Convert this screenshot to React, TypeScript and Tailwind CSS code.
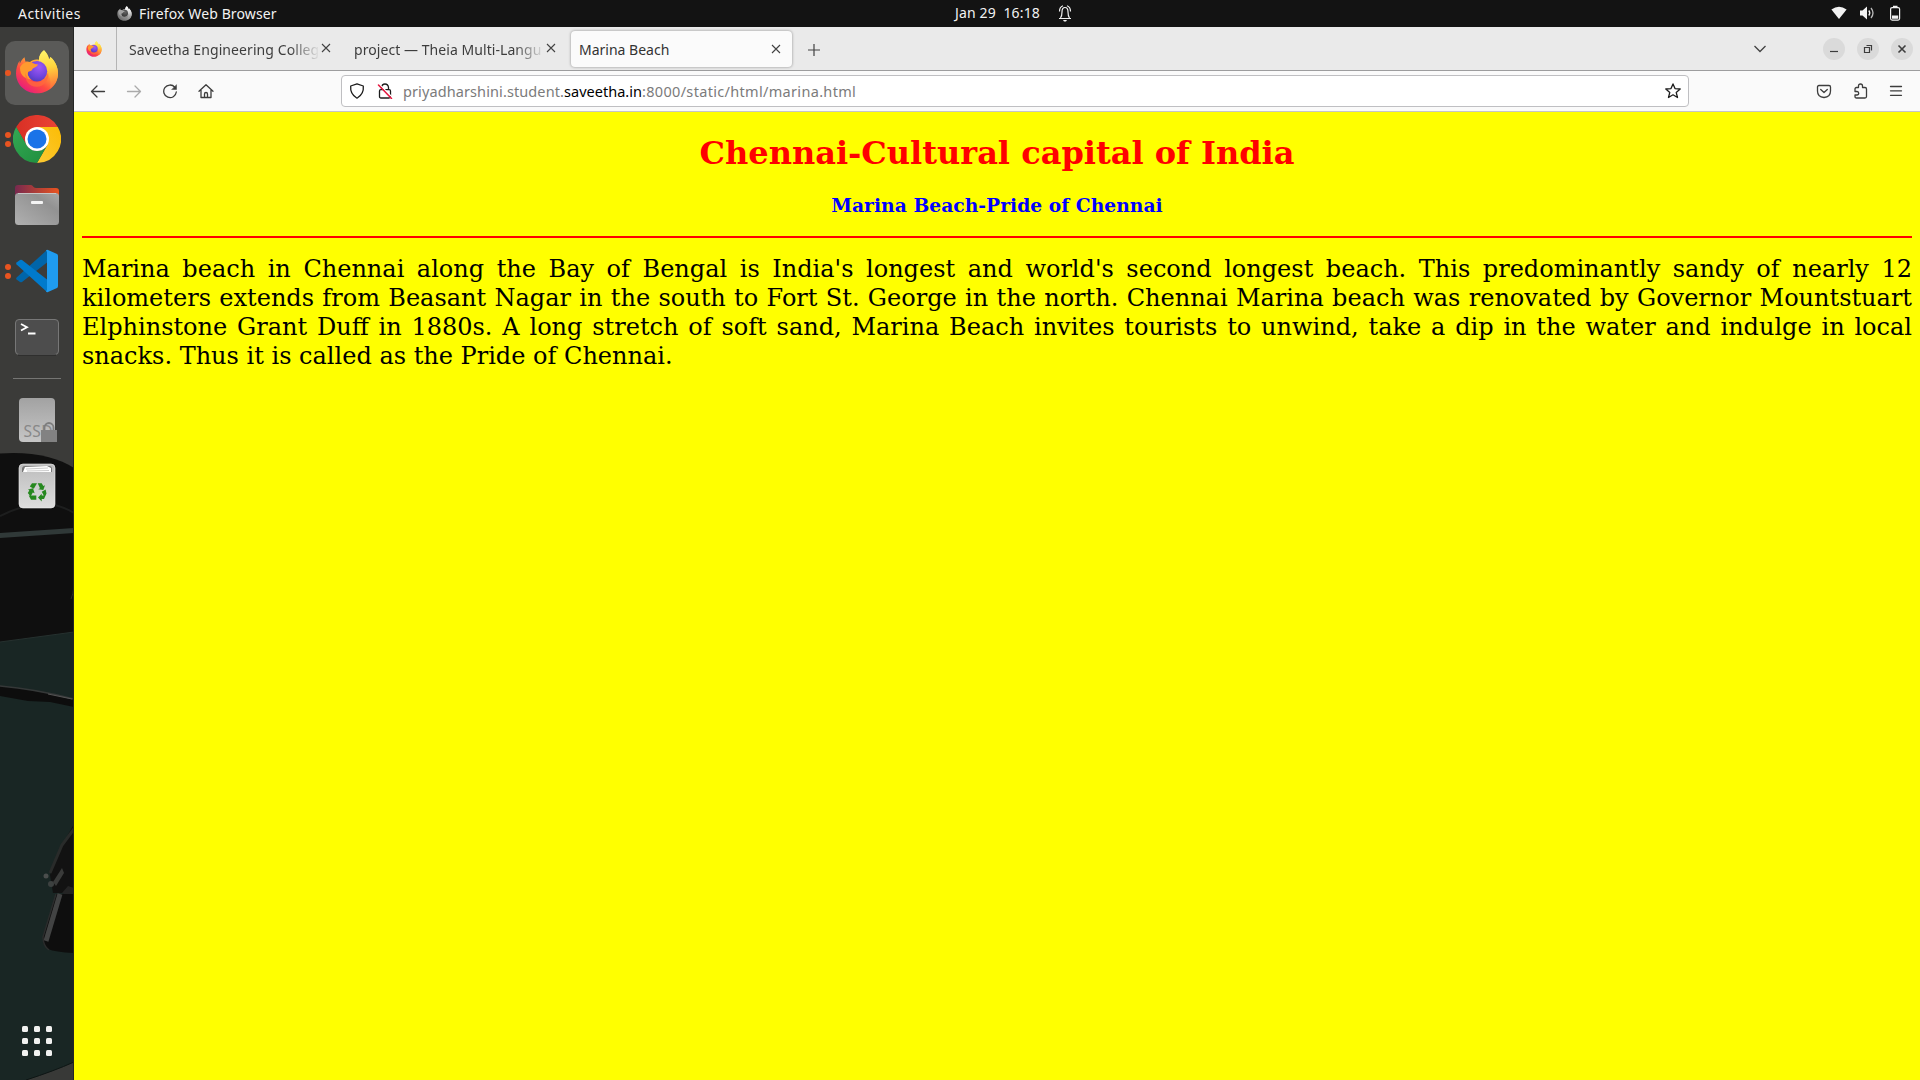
import React from "react";

const ui = "font-['Noto_Sans','Open_Sans',sans-serif]";

function FirefoxLogo({ id, className, mono = false, viewBox = "3 2 42 44" }: { id: string; className: string; mono?: boolean; viewBox?: string }) {
  return (
    <svg viewBox={viewBox} className={className}>
      <defs>
        <linearGradient id={id + "a"} x1="0.85" y1="0.1" x2="0.2" y2="1">
          <stop offset="0" stopColor={mono ? "#e8e8e8" : "#fff44f"} />
          <stop offset="0.35" stopColor={mono ? "#bdbdbd" : "#ffa436"} />
          <stop offset="0.65" stopColor={mono ? "#8a8a8a" : "#ff4a41"} />
          <stop offset="1" stopColor={mono ? "#666" : "#e31587"} />
        </linearGradient>
        <linearGradient id={id + "b"} x1="0.4" y1="0" x2="0.5" y2="1">
          <stop offset="0" stopColor={mono ? "#fff" : "#fff36a"} />
          <stop offset="0.45" stopColor={mono ? "#e0e0e0" : "#ffd53d"} />
          <stop offset="1" stopColor={mono ? "#888" : "#ff7139"} />
        </linearGradient>
        <radialGradient id={id + "c"} cx="0.6" cy="0.3" r="0.8">
          <stop offset="0" stopColor={mono ? "#666" : "#a05af5"} />
          <stop offset="0.6" stopColor={mono ? "#444" : "#6f44dc"} />
          <stop offset="1" stopColor={mono ? "#333" : "#4a3bb5"} />
        </radialGradient>
      </defs>
      <path d="M31 2.500c3 3 4.500 6 5 9 1-.8 1.200-1.500 1.400-2.300C42 13 45 19.500 45 25.500 45 37.500 35.500 45.500 24 45.500S3 37 3 25.500C3 21 4.300 16.500 6.500 13l.3 3C8 13 9.500 11 11.500 9.500L12.500 14c1.500-.4 3-.3 4.500.3C19 12 23 11 26 12c0-4 2-7.500 5-9.500z" fill={"url(#" + id + "a)"} />
      <path d="M31 2.500c3 3 4.500 6 5 9 1-.8 1.200-1.500 1.400-2.300C42 13 45 19.500 45 25.500c0 6-3 12-8 15 1-5 .5-9-1-12-2-6-11-9-10-17.500.4-3.500 2-6.500 5-8.500z" fill={"url(#" + id + "b)"} />
      <circle cx="24" cy="23.500" r="10.200" fill={"url(#" + id + "c)"} />
      <path d="M7 20c1-3.500 5-6 10-5.700 2 .2 3.500 1.700 5 1.900l3 .5c-.5 2.500-5 3-5.700 4.800 0 2-3.500 1.500-4.200 2.900-.9 2 .2 5 3.200 7.500C11 31 7 27 7 20z" fill={mono ? "#a2a2a2" : "#ff9a2e"} />
      <path d="M12.500 25c1 6 5.500 9.500 11 9.500 6 0 11-4 11.500-10.500 1.500 7-3 15-11.500 15-7 0-12-5.500-11-14z" fill={mono ? "#888" : "#ff6a3c"} opacity=".75" />
    </svg>
  );
}

function Wallpaper() {
  return (
    <svg viewBox="0 0 74 1053" className="absolute inset-0 h-full w-full" preserveAspectRatio="none">
      <rect width="74" height="1053" fill="#3b3b39" />
      <path d="M0 426.500C30 424 58 430 74 441V620H0z" fill="#0f0f0f" />
      <path d="M0 489Q18 480 36 477T74 486" fill="none" stroke="#1d1e1e" strokeWidth="2" />
      <path d="M0 506L74 501V506L0 511z" fill="#303938" />
      <path d="M74 559Q73 568 71 572" stroke="#292929" fill="none" />
      <path d="M0 615L74 605V1053H0z" fill="#192624" />
      <path d="M0 615L74 605" stroke="#26312f" />
      <path d="M0 659Q35 662 74 673V680L50 675 28 674 0 669z" fill="#0d0d0d" />
      <path d="M0 659Q35 662 74 672" stroke="#353838" strokeWidth="1.500" fill="none" />
      <path d="M48 667L72 672" stroke="#555" strokeWidth="1" />
      <path d="M74 797L62 818 53 839 50 848 53 866H74z" fill="#121212" />
      <path d="M74 802L62 818 53 839 50 846" stroke="#292b2a" strokeWidth="3" fill="none" />
      <path d="M53 855L62 841 64 846 56 859z" fill="#3a3b3a" />
      <circle cx="46" cy="849" r="2.500" fill="#4b4e4d" />
      <circle cx="51" cy="857" r="3" fill="#3d4140" />
      <path d="M62 866L68 859 74 861V871z" fill="#242424" />
      <path d="M56 867H74V926Q55 925 48 922 42 918 43 909z" fill="#0e0e0e" />
      <path d="M60 867L46 914" stroke="#424343" strokeWidth="5" fill="none" />
      <path d="M56 867L43 910Q43 919 49 923" stroke="#2b2c2c" strokeWidth="1.500" fill="none" />
      <path d="M26 1053Q54 1044 74 1035V1053z" fill="#383937" />
      <path d="M26 1053Q54 1044 74 1035" stroke="#0d1514" fill="none" />
      <path d="M73.500 0V1053" stroke="#252625" />
    </svg>
  );
}

function DockItem({ children, dots = 0, active = false }: { children: React.ReactNode; dots?: number; active?: boolean }) {
  return (
    <div className="relative flex h-[66px] w-[74px] shrink-0 items-center justify-center">
      <div className={active ? "flex h-16 w-16 items-center justify-center rounded-[10px] bg-[#5a5a58]" : "flex h-16 w-16 items-center justify-center"}>{children}</div>
      <div className="absolute inset-y-0 left-[5px] flex flex-col justify-center gap-[3px]">
        {Array.from({ length: dots }, (_, i) => (
          <span key={i} className="h-[6px] w-[6px] rounded-full bg-[#e95420]" />
        ))}
      </div>
    </div>
  );
}

function Dock() {
  return (
    <aside className="relative h-[1053px] w-[74px] shrink-0 overflow-hidden">
      <Wallpaper />
      <div className="relative flex h-full flex-col items-center pt-[13px]">
        <DockItem dots={1} active>
          <FirefoxLogo id="dockfx" viewBox="0 1.2 48 48" className="h-12 w-12" />
        </DockItem>
        <DockItem dots={2}>
          <svg viewBox="0 0 48 48" className="h-12 w-12">
            <defs>
              <linearGradient id="crR" x1="0" x2="1"><stop stopColor="#d93025" /><stop offset="1" stopColor="#ea4335" /></linearGradient>
              <linearGradient id="crY" x1="1" x2="0" y1="0" y2="1"><stop stopColor="#fbbc04" /><stop offset="1" stopColor="#fcc934" /></linearGradient>
              <linearGradient id="crG" x1="1" x2="0" y1="1" y2="0"><stop stopColor="#1e8e3e" /><stop offset="1" stopColor="#34a853" /></linearGradient>
            </defs>
            <path d="M3.200 12A24 24 0 0 1 44.800 12H24L13.600 30z" fill="url(#crR)" />
            <path d="M44.800 12A24 24 0 0 1 24 48L34.400 30 24 12z" fill="url(#crY)" />
            <path d="M24 48A24 24 0 0 1 3.200 12L13.600 30A12 12 0 0 0 34.400 30z" fill="url(#crG)" />
            <circle cx="24" cy="24" r="12" fill="#fff" />
            <circle cx="24" cy="24" r="9.500" fill="#1a73e8" />
          </svg>
        </DockItem>
        <DockItem>
          <svg viewBox="0 0 48 48" className="h-12 w-12">
            <defs>
              <linearGradient id="fo" x1="0" x2="1"><stop stopColor="#77294f" /><stop offset="1" stopColor="#e95420" /></linearGradient>
              <linearGradient id="ff" x1="0" y1="1" x2="1" y2="0"><stop stopColor="#b0b0b0" /><stop offset=".7" stopColor="#929292" /><stop offset="1" stopColor="#a8a8a8" /></linearGradient>
            </defs>
            <path d="M2 7a3 3 0 0 1 3-3h13c2 0 2 3 5 3h20a3 3 0 0 1 3 3v14H2z" fill="url(#fo)" />
            <rect x="2" y="12" width="44" height="32" rx="3.500" fill="url(#ff)" />
            <path d="M5 12.500H43" stroke="#c6c6c6" />
            <rect x="18" y="20" width="12" height="3" rx="1" fill="#f4f4f4" />
          </svg>
        </DockItem>
        <DockItem dots={2}>
          <svg viewBox="0 0 48 48" className="h-12 w-12">
            <path d="M34 3L3.600 30.500Q2.700 31.500 3.600 32.400L7 35Q8 35.600 9 35L34 15.500z" fill="#0065a9" />
            <path d="M34 45L3.600 17.500Q2.700 16.500 3.600 15.600L7 13Q8 12.400 9 13L34 32.500z" fill="#007acc" />
            <path d="M33 3.200Q34 2.500 35 3L44 7Q45 7.600 45 9V39Q45 40.400 44 41L35 45Q34 45.500 33 44.800L34 43V5z" fill="#1f9cf0" />
          </svg>
        </DockItem>
        <DockItem>
          <svg viewBox="0 0 48 48" className="h-12 w-12">
            <rect x="2.500" y="6.500" width="43" height="35" rx="3.500" fill="#4d4d4d" stroke="#777" />
            <path d="M5 42H43" stroke="#252525" />
            <path d="M8 11L14 14.200 8 17.500M15 20.500H22.500" stroke="#fff" strokeWidth="1.800" fill="none" />
          </svg>
        </DockItem>
        <div className="flex h-[17px] w-12 shrink-0 items-center"><div className="h-px w-full bg-[#757573]" /></div>
        <DockItem>
          <svg viewBox="0 0 48 48" className="h-12 w-12">
            <defs><linearGradient id="ss" x1="0" x2="0" y1="0" y2="1"><stop stopColor="#a2a2a2" /><stop offset="1" stopColor="#c6c6c6" /></linearGradient></defs>
            <rect x="6" y="2" width="36" height="44" rx="4" fill="url(#ss)" />
            <text x="10.500" y="40.500" fontSize="15.500" fill="#888" textLength="29" className="font-['Noto_Sans',sans-serif]">SSD</text>
            <path d="M31.500 36v-4.500a4.500 4.500 0 0 1 9 0V36" fill="none" stroke="#7d7d7d" strokeWidth="1.800" />
            <rect x="28" y="34" width="16" height="12" fill="#828282" />
          </svg>
        </DockItem>
        <DockItem>
          <svg viewBox="0 0 48 48" className="h-12 w-12">
            <defs><linearGradient id="tr" x1="0" x2="0" y1="0" y2="1"><stop stopColor="#bcbcbc" /><stop offset="1" stopColor="#dedede" /></linearGradient></defs>
            <rect x="6" y="2" width="36" height="44" rx="4" fill="url(#tr)" stroke="#eee" strokeWidth=".6" />
            <path d="M9 10V7Q9 4 12 4H36Q39 4 39 7V10z" fill="#777" />
            <path d="M10 10L12 5 34 4 38 6V10z" fill="#fff" />
            <path d="M13 7L35 6M14 9L36 8.500" stroke="#aaa" strokeWidth=".6" />
            <g fill="#26881f">
              <path d="M19 21.300H24L20.800 26.700 16.800 24.500z" />
              <path d="M24.700 21.300H28.700L30.300 24 32 23.200 30.300 28 25.200 27.200 27 26.200z" />
              <path d="M28.800 29.700L32.600 27.500 33.500 31.500 31 37H28.700V39.500L25 35.500 28.700 31.700V33.600H30.800z" />
              <path d="M23.300 33.600V37.800H18L15.700 33.600z" />
              <path d="M15 27.500L20 26.300 21.600 31.200 19.800 30.500 17.600 34.500 14.800 31 16.300 28.600z" />
            </g>
          </svg>
        </DockItem>
        <div className="mt-auto mb-[24px] grid grid-cols-3 gap-[6px]">
          {Array.from({ length: 9 }, (_, i) => (
            <span key={i} className="h-[6px] w-[6px] rounded-[1.500px] bg-[#f1f1f0]" />
          ))}
        </div>
      </div>
    </aside>
  );
}

function TopBar() {
  return (
    <header className={"relative flex h-[27px] w-full items-center bg-[#131313] text-[14px] leading-[25px] text-[#f2f2f2] " + ui}>
      <span className="mb-px ml-[18px] w-[99px] tracking-[0.450px]">Activities</span>
      <FirefoxLogo id="topfx" mono className="mb-px h-[15px] w-[15px]" />
      <span className="mb-px ml-[7px] tracking-[0.120px]">Firefox Web Browser</span>
      <div className="absolute left-[955px] flex h-[27px] items-center">
        <span className="mb-[2px] w-[102px] whitespace-pre tracking-[0.150px]">Jan 29  16:18</span>
        <svg viewBox="0 0 16 18" className="mb-px h-[18px] w-4" fill="none" stroke="#f2f2f2" strokeWidth="1.200">
          <path d="M2 14.500h12M3.500 14q1.500-2 1.500-6 0-4.500 3-4.500t3 4.500q0 4 1.500 6" />
          <path d="M2.500 7.500Q2.500 3 6 1.800M13.500 7.500Q13.500 3 10 1.800" />
          <path d="M6 16h4l-1 1.500H7z" fill="#f2f2f2" stroke="none" />
        </svg>
      </div>
      <div className="ml-auto flex items-center gap-3 pr-[17px] pb-px">
        <svg viewBox="0 0 16 16" className="h-4 w-4"><path d="M.4 4.500Q8-1 15.600 4.500L8 14z" fill="#f2f2f2" /></svg>
        <svg viewBox="0 0 16 16" className="h-4 w-4" fill="none" stroke="#f2f2f2" strokeWidth="1.300">
          <path d="M1 5.500h2.500L8 1.500v13l-4.500-4H1z" fill="#f2f2f2" stroke="none" />
          <path d="M9.800 5.500q2 2.500 0 5" /><path d="M12 3q4 5 0 10" opacity=".75" />
        </svg>
        <svg viewBox="0 0 16 16" className="h-4 w-4"><rect x="3.600" y="2.600" width="9" height="12.500" rx="1.500" fill="none" stroke="#f2f2f2" strokeWidth="1.200" /><path d="M6 .7h4.500v1.500H6zM5 10.500h6.200v3.300H5z" fill="#f2f2f2" /></svg>
      </div>
    </header>
  );
}

const Cross = ({ className = "" }: { className?: string }) => (
  <svg viewBox="0 0 10 10" className={"h-[10px] w-[10px] shrink-0 " + className} fill="none" stroke="#424242" strokeWidth="1.100"><path d="M1 1l8 8M9 1L1 9" /></svg>
);

const fade = "whitespace-nowrap [mask-image:linear-gradient(to_right,black_84%,transparent)]";

function TabStrip() {
  return (
    <div className="flex h-[44px] items-stretch border-b border-[#9d9d9e] bg-[#eaeaea] text-[14px] text-[#3d3d3d]">
      <div className="flex w-[43px] items-center border-r border-[#b5b5b5] pl-3"><FirefoxLogo id="tabfx" className="h-4 w-4" /></div>
      <div className="flex w-[225px] items-center pl-3">
        <span className={"mt-px w-[191px] tracking-[0.080px] " + fade}>Saveetha Engineering Colleg</span>
        <Cross className="mb-[2px] ml-px" />
      </div>
      <div className="flex w-[229px] items-center pl-3">
        <span className={"mt-px w-[191px] tracking-[0.060px] " + fade}>project — Theia Multi-Langu</span>
        <Cross className="mb-[2px] ml-px" />
      </div>
      <div className="my-1 mb-[3px] flex w-[221px] items-center justify-between rounded-[4px] bg-[#fbfbfb] pr-[11px] pl-2 text-[#333] shadow-[0_0_3px_rgba(0,0,0,0.4)]">
        <span className="tracking-[0px]">Marina Beach</span>
        <Cross className="mb-px" />
      </div>
      <svg viewBox="0 0 12 12" className="mt-[17px] ml-4 h-3 w-3" fill="none" stroke="#424242" strokeWidth="1.200"><path d="M6 0v12M0 6h12" /></svg>
      <div className="ml-auto flex items-center gap-3 pr-[7px]">
        <svg viewBox="0 0 12 8" className="mr-[45px] h-2 w-3" fill="none" stroke="#424242" strokeWidth="1.300"><path d="M.5 1L6 6.500 11.500 1" /></svg>
        {["M7 13.500h8", "M7.500 9.500h5v5h-5zM9.500 7.500h5v5", "M7.500 7.500l7 7M14.500 7.500l-7 7"].map((d, i) => (
          <svg key={d} viewBox="0 0 22 22" className="h-[22px] w-[22px]" fill="none" stroke="#3d3d3d" strokeWidth={i === 2 ? 1.6 : 1.2}>
            <circle cx="11" cy="11" r="11" fill="#dadada" stroke="none" />
            <path d={d} />
          </svg>
        ))}
      </div>
    </div>
  );
}

const line = { fill: "none", stroke: "#3d3d3d", strokeWidth: 1.3, strokeLinecap: "round", strokeLinejoin: "round" } as const;

function Toolbar() {
  return (
    <div className="flex h-[41px] items-center border-b border-[#c5c5c7] bg-[#fafafa]">
      <div className="flex w-[267px] items-center gap-5 pl-4">
        <svg viewBox="0 0 16 16" className="h-4 w-4" {...line}><path d="M14.500 8.500h-13M7 3L1.500 8.500 7 14" /></svg>
        <svg viewBox="0 0 16 16" className="h-4 w-4" {...line} stroke="#aaa"><path d="M1.500 8.500h13M9 3l5.500 5.500L9 14" /></svg>
        <svg viewBox="0 0 16 16" className="h-4 w-4" {...line}><path d="M12.800 4.200A6.300 6.300 0 1 0 14.300 9" /><path d="M14.500 2v4.500H10z" fill="#3d3d3d" strokeWidth=".5" /></svg>
        <svg viewBox="0 0 16 16" className="-ml-[0.500px] h-4 w-4" {...line}><path d="M1 8.300L8 1.700l7 6.600M3 7v7.500h10V7M6.500 14.500V11q0-1.500 1.500-1.500T9.500 11v3.500" /></svg>
      </div>
      <div className="flex h-8 w-[1348px] items-center rounded-[4px] border border-[#bfbfc2] bg-white pr-[7px] pl-[7px]">
        <svg viewBox="0 0 16 16" className="h-4 w-4" {...line} stroke="#1c1c1c"><path d="M8 .8l6.300 2.200q.8 8-6.300 12.200Q.9 11 1.700 3z" /></svg>
        <svg viewBox="0 0 16 16" className="ml-3 h-4 w-4" {...line} stroke="#1c1c1c"><path d="M4.500 6.500V4.300Q5 1 8 1t3.500 3.300v2.200M3.800 6.700h8.400q1.300 0 1.300 1.300v5.500q0 1.500-1.500 1.500H4q-1.500 0-1.500-1.500V8q0-1.300 1.300-1.300" /><path d="M2.500 1.500l13 13" stroke="#fff" /><path d="M1.500 2l13 13.500" stroke="#e5173f" strokeWidth="1.500" /></svg>
        <span className="mt-[2px] ml-[10px] text-[14.500px] tracking-[0.210px] whitespace-nowrap text-[#7b7b7b]"><span className="tracking-[0.100px]">priyadharshini.student.</span><span className="tracking-[0.020px] text-black">saveetha.in</span><span className="tracking-[0.320px]">:8000/static/html/marina.html</span></span>
        <svg viewBox="0 0 16 16" className="ml-auto h-4 w-4" {...line} stroke="#1c1c1c"><path d="M8 .9l2 4.700 5.200.4-4 3.400 1.300 5.100L8 11.800l-4.500 2.700 1.300-5.100L.8 6 6 5.600z" /></svg>
      </div>
      <div className="ml-auto flex items-center gap-5 pr-4">
        <svg viewBox="0 0 16 16" className="h-4 w-4" {...line}><path d="M3 2.500h10q1.500 0 1.500 1.500v4q0 6-6.500 6.500Q1.500 14 1.500 8V4q0-1.500 1.500-1.500zM4.700 6.500L8 9.500l3.300-3" /></svg>
        <svg viewBox="-1 0 16 16" className="h-4 w-4" {...line}><path d="M5.500 4.500V3q0-2 2-2t2 2v1.500H12q1.500 0 1.500 1.500v7.500q0 1.500-1.500 1.500H3.500q-1.500 0-1.500-1.500V12h2q1.700 0 1.700-1.700T4 8.500H2V6q0-1.500 1.500-1.500z" /></svg>
        <svg viewBox="0 0 16 16" className="h-4 w-4" {...line}><path d="M2.500 3.500h11M2.500 7.800h11M2.500 12.300h11" /></svg>
      </div>
    </div>
  );
}

export default function App() {
  return (
    <div className="flex h-[1080px] w-[1920px] flex-col overflow-hidden bg-[#131313]">
      <TopBar />
      <div className="flex">
        <Dock />
        <main className="flex h-[1053px] w-[1846px] flex-col">
          <div className={ui}>
            <TabStrip />
            <Toolbar />
          </div>
          <article className="flex-1 bg-[#ffff00] px-2 font-['DejaVu_Serif',serif] text-black">
            <h1 className="pt-[22px] text-center text-[32px] leading-[38px] font-bold text-[#ff0000]">Chennai-Cultural capital of India</h1>
            <h3 className="pt-[22px] text-center text-[18.720px] leading-[22px] font-bold tracking-[0.020px] text-[#0000ff]">Marina Beach-Pride of Chennai</h3>
            <div className="mt-5 h-[2px] bg-[#ff0000]" />
            <p className="mt-[17px] text-justify text-[24px] leading-[29px]">
              Marina beach in Chennai along the Bay of Bengal is India's longest and world's second longest beach. This predominantly sandy of nearly 12 kilometers extends from Beasant Nagar in the south to Fort St. George in the north. Chennai Marina beach was renovated by Governor Mountstuart Elphinstone Grant Duff in 1880s. A long stretch of soft sand, Marina Beach invites tourists to unwind, take a dip in the water and indulge in local snacks. Thus it is called as the Pride of Chennai.
            </p>
          </article>
        </main>
      </div>
    </div>
  );
}
